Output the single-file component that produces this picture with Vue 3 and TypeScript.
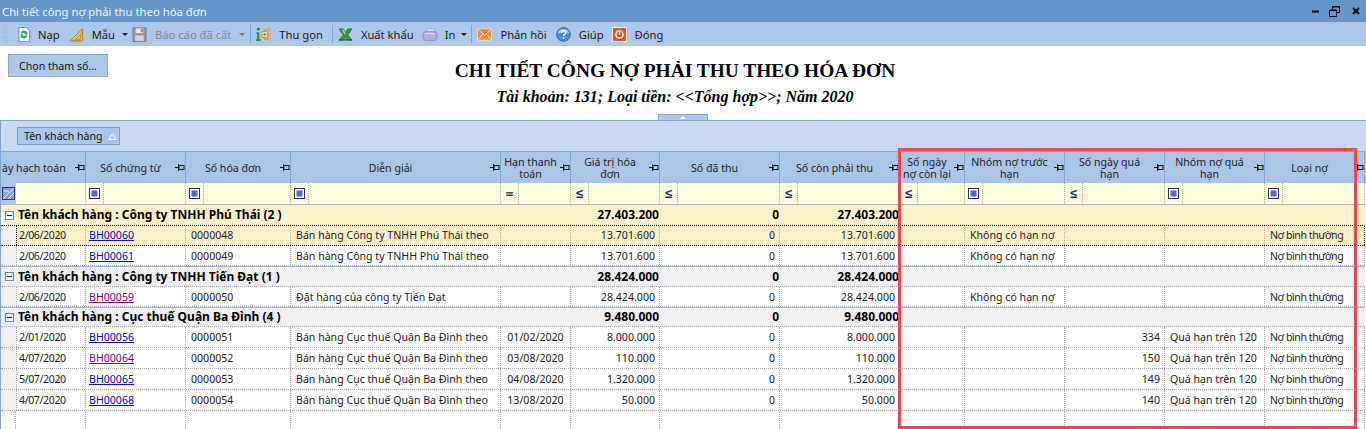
<script setup lang="ts">
interface Head { label: string; op: 'box' | 'le' | 'eq' | 'none' }
interface Row {
  kind: 'data'
  date: string; ct: string; visited: boolean; hd: string; dg: string; han: string
  gt: string; thu: string; con: string; days: string; truoc: string; qua: string; loai: string
  selected?: boolean
  tight?: boolean
}
interface Group { kind: 'group'; label: string; gt: string; thu: string; con: string; grey: boolean; tall?: boolean }

const heads: Head[] = [
  { label: 'ày hạch toán', op: 'none' },
  { label: 'Số chứng từ', op: 'box' },
  { label: 'Số hóa đơn', op: 'box' },
  { label: 'Diễn giải', op: 'box' },
  { label: 'Hạn thanh\ntoán', op: 'eq' },
  { label: 'Giá trị hóa\nđơn', op: 'le' },
  { label: 'Số đã thu', op: 'le' },
  { label: 'Số còn phải thu', op: 'le' },
  { label: 'Số ngày\nnợ còn lại', op: 'le' },
  { label: 'Nhóm nợ trước\nhạn', op: 'box' },
  { label: 'Số ngày quá\nhạn', op: 'le' },
  { label: 'Nhóm nợ quá\nhạn', op: 'box' },
  { label: 'Loại nợ', op: 'box' },
]

const base = { han: '', days: '', truoc: '', qua: '', loai: 'Nợ bình thường', thu: '0', kind: 'data' as const }
const rows: (Row | Group)[] = [
  { kind: 'group', label: 'Tên khách hàng : Công ty TNHH Phú Thái (2 )', gt: '27.403.200', thu: '0', con: '27.403.200', grey: false },
  { ...base, date: '2/06/2020', ct: 'BH00060', visited: false, hd: '0000048', dg: 'Bán hàng Công ty TNHH Phú Thái theo', gt: '13.701.600', con: '13.701.600', truoc: 'Không có hạn nợ', selected: true },
  { ...base, date: '2/06/2020', ct: 'BH00061', visited: false, hd: '0000049', dg: 'Bán hàng Công ty TNHH Phú Thái theo', gt: '13.701.600', con: '13.701.600', truoc: 'Không có hạn nợ', tight: true },
  { kind: 'group', label: 'Tên khách hàng : Công ty TNHH Tiến Đạt (1 )', gt: '28.424.000', thu: '0', con: '28.424.000', grey: true, tall: true },
  { ...base, date: '2/06/2020', ct: 'BH00059', visited: true, hd: '0000050', dg: 'Đặt hàng của công ty Tiến Đạt', gt: '28.424.000', con: '28.424.000', truoc: 'Không có hạn nợ', tight: true },
  { kind: 'group', label: 'Tên khách hàng : Cục thuế Quận Ba Đình (4 )', gt: '9.480.000', thu: '0', con: '9.480.000', grey: true },
  { ...base, date: '2/01/2020', ct: 'BH00056', visited: false, hd: '0000051', dg: 'Bán hàng Cục thuế Quận Ba Đình theo', han: '01/02/2020', gt: '8.000.000', con: '8.000.000', days: '334', qua: 'Quá hạn trên 120' },
  { ...base, date: '4/07/2020', ct: 'BH00064', visited: true, hd: '0000052', dg: 'Bán hàng Cục thuế Quận Ba Đình theo', han: '03/08/2020', gt: '110.000', con: '110.000', days: '150', qua: 'Quá hạn trên 120' },
  { ...base, date: '5/07/2020', ct: 'BH00065', visited: false, hd: '0000053', dg: 'Bán hàng Cục thuế Quận Ba Đình theo', han: '04/08/2020', gt: '1.320.000', con: '1.320.000', days: '149', qua: 'Quá hạn trên 120' },
  { ...base, date: '4/07/2020', ct: 'BH00068', visited: false, hd: '0000054', dg: 'Bán hàng Cục thuế Quận Ba Đình theo', han: '13/08/2020', gt: '50.000', con: '50.000', days: '140', qua: 'Quá hạn trên 120' },
]
const blankCols = 14
</script>

<template>
  <div class="app">
    <div class="titlebar">
      <span class="wintitle">Chi tiết công nợ phải thu theo hóa đơn</span>
      <div class="winctl">
        <svg width="8" height="3" viewBox="0 0 8 3"><rect width="7" height="2" y="0.5" fill="#000" /></svg>
        <svg width="11" height="11" viewBox="0 0 11 11"><path d="M3.5 3V.5h7v6H8M.5 4h7v6.5h-7z" fill="none" stroke="#000" /><path d="M3 1h7.500M0 4.500h7.500" stroke="#000" /></svg>
        <svg width="8" height="8" viewBox="0 0 8 8"><path d="M1 1l6 6M7 1L1 7" stroke="#000" stroke-width="2" /></svg>
      </div>
    </div>

    <div class="toolbar">
      <span class="grip"></span>
      <div class="tool t-nap">
        <svg class="ic" viewBox="0 0 14 16"><path d="M1.500.5h8l3.500 3.500v11.500H1.500z" fill="#f7faff" stroke="#6f86ad" /><path d="M3.500 7a3.500 3.500 0 0 1 6-2l1-1v4H7l1.200-1.200a2 2 0 0 0-3 .4zM10.500 9a3.500 3.500 0 0 1-6 2l-1 1V8H7L5.800 9.200a2 2 0 0 0 3-.4z" fill="#25a53a" /></svg>
        <span>Nạp</span>
      </div>
      <div class="tool t-mau">
        <svg class="ic" viewBox="0 0 15 16"><path d="M.5 15L14 1.500V15z" fill="#e8c050" stroke="#b98a2a" /><path d="M6.500 13l5-5v5z" fill="#b3cae9" stroke="#b98a2a" /><path d="M3 15v-1.500M5 15v-1.500M7 15v-1.500M9 15v-1.500M11 15v-1.500M13 3v1M13 5v1M13 7v1" stroke="#8c6414" stroke-width=".7" /></svg>
        <span>Mẫu</span>
        <i class="arrow dark"></i>
      </div>
      <div class="tool t-save disabled">
        <svg class="ic" viewBox="0 0 15 16"><path d="M.5 1h14v14.500H.5z" fill="#9a9a9a" stroke="#777" /><rect x="3.500" y="1.500" width="8" height="5" fill="#e4e4e4" /><rect x="3" y="9" width="9" height="6" fill="#d4d4d4" /><rect x="9" y="2" width="2" height="3.500" fill="#888" /></svg>
        <span>Báo cáo đã cất</span>
        <i class="arrow grey"></i>
      </div>
      <i class="sep s1"></i>
      <div class="tool t-thu">
        <svg class="ic" viewBox="0 0 16 16"><rect x="1" y="1" width="3" height="2.500" fill="#1f9b1f" /><path d="M.5 5.500H3.500v7.500H5V15H0v-2h1.200V7.500H.5z" fill="#1f9b1f" /><rect x="6.500" y="5" width="5.500" height="6" fill="#fbe3a8" stroke="#cf8a30" /><path d="M9.200 6.500v3M7.800 8h3" stroke="#b36a18" /><path d="M12 3h2M12 8h2M12 13h2M9 5V3h3M9 11v2h3" fill="none" stroke="#cf8a30" /><rect x="13.500" y="1.800" width="2" height="2.400" fill="#f6d38a" stroke="#cf8a30" stroke-width=".6" /><rect x="13.500" y="6.800" width="2" height="2.400" fill="#f6d38a" stroke="#cf8a30" stroke-width=".6" /><rect x="13.500" y="11.800" width="2" height="2.400" fill="#f6d38a" stroke="#cf8a30" stroke-width=".6" /></svg>
        <span>Thu gọn</span>
      </div>
      <i class="sep s2"></i>
      <div class="tool t-xuat">
        <svg class="ic" viewBox="0 0 16 16"><path d="M1 2h4.500L8 6l2.500-4H15l-4.700 6.500L15 14h-4.500L8 10.500 5.500 14H1l4.700-5.500z" fill="#2f9e3a" stroke="#15702a" stroke-width=".8" /><path d="M4 3h2l2 4-1 1z" fill="#9fe08a" /><rect x="1" y="13" width="14" height="1.500" fill="#15702a" /></svg>
        <span>Xuất khẩu</span>
      </div>
      <div class="tool t-in">
        <svg class="ic wide" viewBox="0 0 17 16"><path d="M5 2.500c0-1.500 6-1.500 8 0l1 3H5z" fill="#c8dcf5" stroke="#8f9fc6" stroke-width=".8" /><path d="M1 8c0-2.500 2-3 4-3h7c2.500 0 4 .8 4 3v3c0 2.500-2 3.500-4 3.500H5c-2.500 0-4-1-4-3.500z" fill="#b5b0dc" stroke="#8080b8" stroke-width=".8" /><path d="M3 7h10" stroke="#e6e6f6" /></svg>
        <span>In</span>
        <i class="arrow dark"></i>
      </div>
      <i class="sep s3"></i>
      <div class="tool t-mail">
        <svg class="ic" viewBox="0 0 16 16"><rect x="0.500" y="2" width="15" height="12" fill="#f08a38" stroke="#fff2e0" stroke-width=".6" /><path d="M1 2.500L8 9l7-6.500M1 13.500L6 7.500M15 13.500L10 7.500" fill="none" stroke="#fde6cd" /></svg>
        <span>Phản hồi</span>
      </div>
      <div class="tool t-help">
        <svg class="ic" viewBox="0 0 16 16"><circle cx="8" cy="8" r="7.300" fill="#4a90dc" stroke="#2b62ae" /><path d="M2 7a6 5 0 0 1 12 0c-3-1.500-8-1.500-12 0z" fill="#a6cff3" /><path d="M5.800 6.200c0-3 4.600-2.800 4.600-.3 0 1.900-2.300 1.700-2.300 3.700" fill="none" stroke="#fff" stroke-width="1.500" /><rect x="7.200" y="10.800" width="1.800" height="1.800" fill="#fff" /></svg>
        <span>Giúp</span>
      </div>
      <div class="tool t-dong">
        <svg class="ic" viewBox="0 0 16 16"><rect x=".5" y=".5" width="15" height="15" fill="#e0552a" stroke="#f3f3f3" /><circle cx="8" cy="8" r="3.800" fill="none" stroke="#fff" stroke-width="1.500" /><path d="M8 3.500v4.500" stroke="#fff" stroke-width="1.500" /></svg>
        <span>Đóng</span>
      </div>
    </div>

    <div class="report-head">
      <button class="param-btn" type="button">Chọn tham số...</button>
      <div class="report-title">
        <h1>CHI TIẾT CÔNG NỢ PHẢI THU THEO HÓA ĐƠN</h1>
        <h2>Tài khoản: 131; Loại tiền: &lt;&lt;Tổng hợp&gt;&gt;; Năm 2020</h2>
      </div>
    </div>

    <div class="splitter"><div class="splitter-tab"><i></i></div></div>

    <div class="group-panel">
      <div class="chip">
        <span>Tên khách hàng</span>
        <svg width="9" height="7" viewBox="0 0 9 7"><path d="M4.500 .8L8.300 6.500H.7z" fill="none" stroke="#ffffff" /></svg>
      </div>
    </div>

    <div class="grid">
      <div class="row head-row">
        <div v-for="(h, i) in heads" :key="h.label" class="hcell" :class="{ first: i === 0 }">
          <span class="htext">{{ h.label }}</span>
          <svg class="pin" width="10" height="9" viewBox="0 0 10 9"><path d="M0 4.500h3.500M3.500 1v7" stroke="#111" /><rect x="4" y="2.500" width="5" height="4" fill="none" stroke="#111" /></svg>
        </div>
      </div>

      <div class="row filter-row">
        <div v-for="(h, i) in heads" :key="h.label" class="fcell" :class="{ first: i === 0 }">
          <template v-if="i === 0">
            <span class="corner"><svg width="13" height="13" viewBox="0 0 13 13"><rect x=".5" y=".5" width="12" height="12" fill="#8a9bd6" stroke="#33336b" /><path d="M1 12L12 1M6 12l6-6M2 4h5" stroke="#eef0fa" /></svg></span>
          </template>
          <template v-else>
            <span class="op">
              <svg v-if="h.op === 'box'" width="11" height="11" viewBox="0 0 11 11"><rect x=".5" y=".5" width="10" height="10" fill="#fff" stroke="#2c2c66" /><rect x="2.500" y="2.500" width="6" height="6" fill="#5f5fcf" /></svg>
              <span v-else-if="h.op === 'le'" class="le">≤</span>
              <span v-else-if="h.op === 'eq'" class="eq">=</span>
            </span>
          </template>
        </div>
      </div>

      <template v-for="(r, idx) in rows" :key="idx">
        <div v-if="r.kind === 'group'" class="row group-row" :class="{ grey: r.grey, tall: r.tall }">
          <span class="expander"><i></i></span>
          <span class="glabel">{{ r.label }}</span>
          <span class="gnum c7">{{ r.gt }}</span>
          <span class="gnum c8">{{ r.thu }}</span>
          <span class="gnum c9">{{ r.con }}</span>
        </div>
        <div v-else class="row data-row" :class="{ selected: r.selected, tight: r.tight }">
          <span class="ind"></span>
          <span class="cell date">{{ r.date }}</span>
          <span class="cell lnk"><a :class="{ visited: r.visited }">{{ r.ct }}</a></span>
          <span class="cell txt">{{ r.hd }}</span>
          <span class="cell txt">{{ r.dg }}</span>
          <span class="cell mid">{{ r.han }}</span>
          <span class="cell num">{{ r.gt }}</span>
          <span class="cell num">{{ r.thu }}</span>
          <span class="cell num">{{ r.con }}</span>
          <span class="cell num"></span>
          <span class="cell txt">{{ r.truoc }}</span>
          <span class="cell num">{{ r.days }}</span>
          <span class="cell txt">{{ r.qua }}</span>
          <span class="cell txt">{{ r.loai }}</span>
        </div>
      </template>
      <div class="row blank-row">
        <span v-for="n in blankCols" :key="n" class="cell"></span>
      </div>
    </div>

    <div class="highlight"></div>
  </div>
</template>

<style>
html, body { margin: 0; background: #fff; }
</style>

<style scoped>
.app {
  position: relative;
  width: 1366px;
  height: 429px;
  overflow: hidden;
  background: #fff;
  font-family: "Noto Sans", "Liberation Sans", sans-serif;
  font-size: 10.6px;
  color: #111;
}
.titlebar {
  height: 22px;
  background: #6496c8;
  display: flex;
  align-items: center;
  justify-content: space-between;
  padding: 0 6px 0 2px;
}
.wintitle { color: #eef4fb; font-size: 11.3px; }
.winctl { display: flex; align-items: center; gap: 5px; }
.winctl svg:first-child { margin-right: 4px; }
.winctl svg:last-child { margin-left: 7px; }

.toolbar {
  height: 24px;
  background: #adc7e8;
  display: flex;
  align-items: center;
  font-size: 11.2px;
}
.grip {
  width: 5px;
  height: 20px;
  margin-left: 3px;
  background-image: radial-gradient(#8aa0bf 0.7px, transparent 0.8px);
  background-size: 2.5px 2.5px;
}
.tool { display: flex; align-items: center; gap: 8px; white-space: nowrap; color: #1a1a1a; }
.tool.disabled { color: #7d8793; }
.ic { width: 15px; height: 15px; flex: none; }
.ic.wide { width: 16px; }
.arrow { width: 0; height: 0; border: 3px solid transparent; border-top: 3px solid #222; border-bottom: 0; }
.arrow.grey { border-top-color: #777; }
.sep { width: 1px; height: 18px; background: #7ea4d0; flex: none; }
.t-nap { margin-left: 9px; gap: 7px; }
.t-nap .ic { width: 14px; }
.t-mau { margin-left: 9px; }
.t-mau .arrow { margin-left: -1px; }
.t-save { margin-left: 4px; }
.s1 { margin-left: 5px; }
.t-thu { margin-left: 5px; }
.s2 { margin-left: 9px; }
.t-xuat { margin-left: 5px; }
.t-in { margin-left: 8px; gap: 7px; }
.t-in .arrow { margin-left: -1px; }
.s3 { margin-left: 4px; }
.t-mail { margin-left: 5px; }
.t-help { margin-left: 9px; }
.t-dong { margin-left: 8px; }

.report-head {
  height: 68px;
  display: grid;
  grid-template-columns: 108px 1134px;
}
.param-btn {
  margin: 8px 0 0 8px;
  width: 100px;
  height: 23px;
  padding: 0;
  background: #adc7e8;
  border: 1px solid #7ea6dc;
  font: inherit;
  color: #111;
}
.report-title { text-align: center; color: #000; font-family: "Liberation Serif", serif; }
.report-title h1 { margin: 14px 0 0; font-size: 19.4px; line-height: 22px; font-weight: 700; }
.report-title h2 { margin: 5px 0 0; font-size: 16px; line-height: 20px; font-weight: 700; font-style: italic; }

.splitter { height: 6px; padding-left: 658px; }
.splitter-tab {
  width: 50px;
  height: 6px;
  box-sizing: border-box;
  background: #adc7e8;
  border: 1px solid #7ea6d6;
  border-bottom: 0;
  display: flex;
  justify-content: center;
  padding-top: 1px;
}
.splitter-tab i { width: 0; height: 0; border: 3px solid transparent; border-bottom: 3px solid #fff; border-top: 0; }

.group-panel {
  height: 31px;
  box-sizing: border-box;
  background: #c9d9ef;
  border-top: 1px solid #7ea6d6;
  padding: 6px 0 0 17px;
  border-left: 1px solid #7ea6d6;
}
.chip {
  width: 103px;
  height: 18px;
  box-sizing: border-box;
  margin-left: -1px;
  background: #adc7e8;
  border: 1px solid #7a9cc8;
  display: flex;
  align-items: center;
  gap: 5px;
  padding-left: 6px;
  white-space: nowrap;
}

.grid { border-left: 1px solid #7ea6d6; }
.row {
  display: grid;
  grid-template-columns: 15px 70px 100px 105px 210px 70px 89px 120px 120px 65px 100px 100px 100px 100px;
  width: 1364px;
}
.head-row, .filter-row {
  grid-template-columns: 85px 100px 105px 210px 70px 89px 120px 120px 65px 100px 100px 100px 100px;
}
.head-row { height: 32px; background: #abc5e6; width: 1365px; }
.hcell {
  display: flex;
  align-items: center;
  box-sizing: border-box;
  border-right: 1px solid #7ea6d6;
  border-top: 1px solid #7ea6d6;
  min-width: 0;
}
.htext { flex: 1; text-align: center; line-height: 12px; min-width: 0; color: #222; padding: 0 1px; white-space: pre-line; }
.hcell.first .htext { text-align: left; white-space: nowrap; }
.pin { flex: none; }

.filter-row { height: 22px; background: #ffffdf; border-bottom: 1px solid #9db3d3; box-sizing: border-box; }
.fcell { border-right: 1px dotted #a8a8a8; display: flex; box-sizing: border-box; min-width: 0; }
.fcell.first { border-right-style: solid; border-right-color: #c8d4e0; }
.op {
  width: 18px;
  box-sizing: border-box;
  border-right: 1px dotted #a8a8a8;
  display: flex;
  align-items: center;
  justify-content: center;
  flex: none;
}
.corner { width: 15px; background: #adc7e8; display: flex; align-items: center; justify-content: center; }
.le { color: #2c2c70; font-size: 13px; font-weight: 700; line-height: 1; }
.eq { color: #444; font-size: 14px; font-weight: 700; line-height: 1; }

.group-row {
  height: 20px;
  box-sizing: border-box;
  align-items: center;
  background: #fff2cb;
  font-weight: 700;
  color: #000;
  font-size: 12px;
  line-height: 16px;
}
.group-row.grey { background: #efefef; border-top: 1px solid #9db3d3; border-bottom: 1px dotted #a8a8a8; }
.group-row.tall { height: 21px; }
.expander {
  width: 9px;
  height: 9px;
  box-sizing: border-box;
  margin-left: 4px;
  border: 1px solid #6a88ae;
  background: #f6f8fb;
  display: flex;
  align-items: center;
  justify-content: center;
}
.expander i { width: 5px; height: 1px; background: #223; }
.glabel { grid-column: 2 / 6; padding-left: 2px; white-space: nowrap; }
.gnum { text-align: right; padding-right: 1px; }
.c7 { grid-column: 7; }
.c8 { grid-column: 8; }
.c9 { grid-column: 9; }

.data-row {
  height: 21px;
  box-sizing: border-box;
  background: #fff;
  border-bottom: 1px dotted #a8a8a8;
  align-items: stretch;
}
.data-row.tight { height: 20px; }
.data-row.selected {
  background: #fdf0c9;
  border-top: 1px dotted #111;
  border-bottom: 1px dotted #111;
}
.ind { background: #efefef; }
.cell {
  display: block;
  line-height: 21px;
  border-right: 1px dotted #a8a8a8;
  white-space: nowrap;
  overflow: hidden;
  box-sizing: border-box;
  min-width: 0;
  color: #1a1a1a;
}
.tight .cell { line-height: 20px; }
.selected .cell { line-height: 19px; }
.date { padding-left: 2px; border-left: 1px dotted #a8a8a8; letter-spacing: -0.4px; }
.selected .date { border-left-color: #111; }
.selected .cell:last-child { border-right-color: #111; }
.data-row .cell:last-child { letter-spacing: -0.45px; }
.lnk { padding-left: 3px; }
.lnk a { color: #0000e6; text-decoration: underline; }
.lnk a.visited { color: #800080; }
.txt { padding-left: 5px; }
.mid { text-align: center; }
.num { text-align: right; padding-right: 4px; }

.blank-row { height: 18px; }

.highlight {
  position: absolute;
  left: 898px;
  top: 148px;
  width: 459px;
  height: 281px;
  box-sizing: border-box;
  border: 3.5px solid #f5444a;
  pointer-events: none;
}
</style>
